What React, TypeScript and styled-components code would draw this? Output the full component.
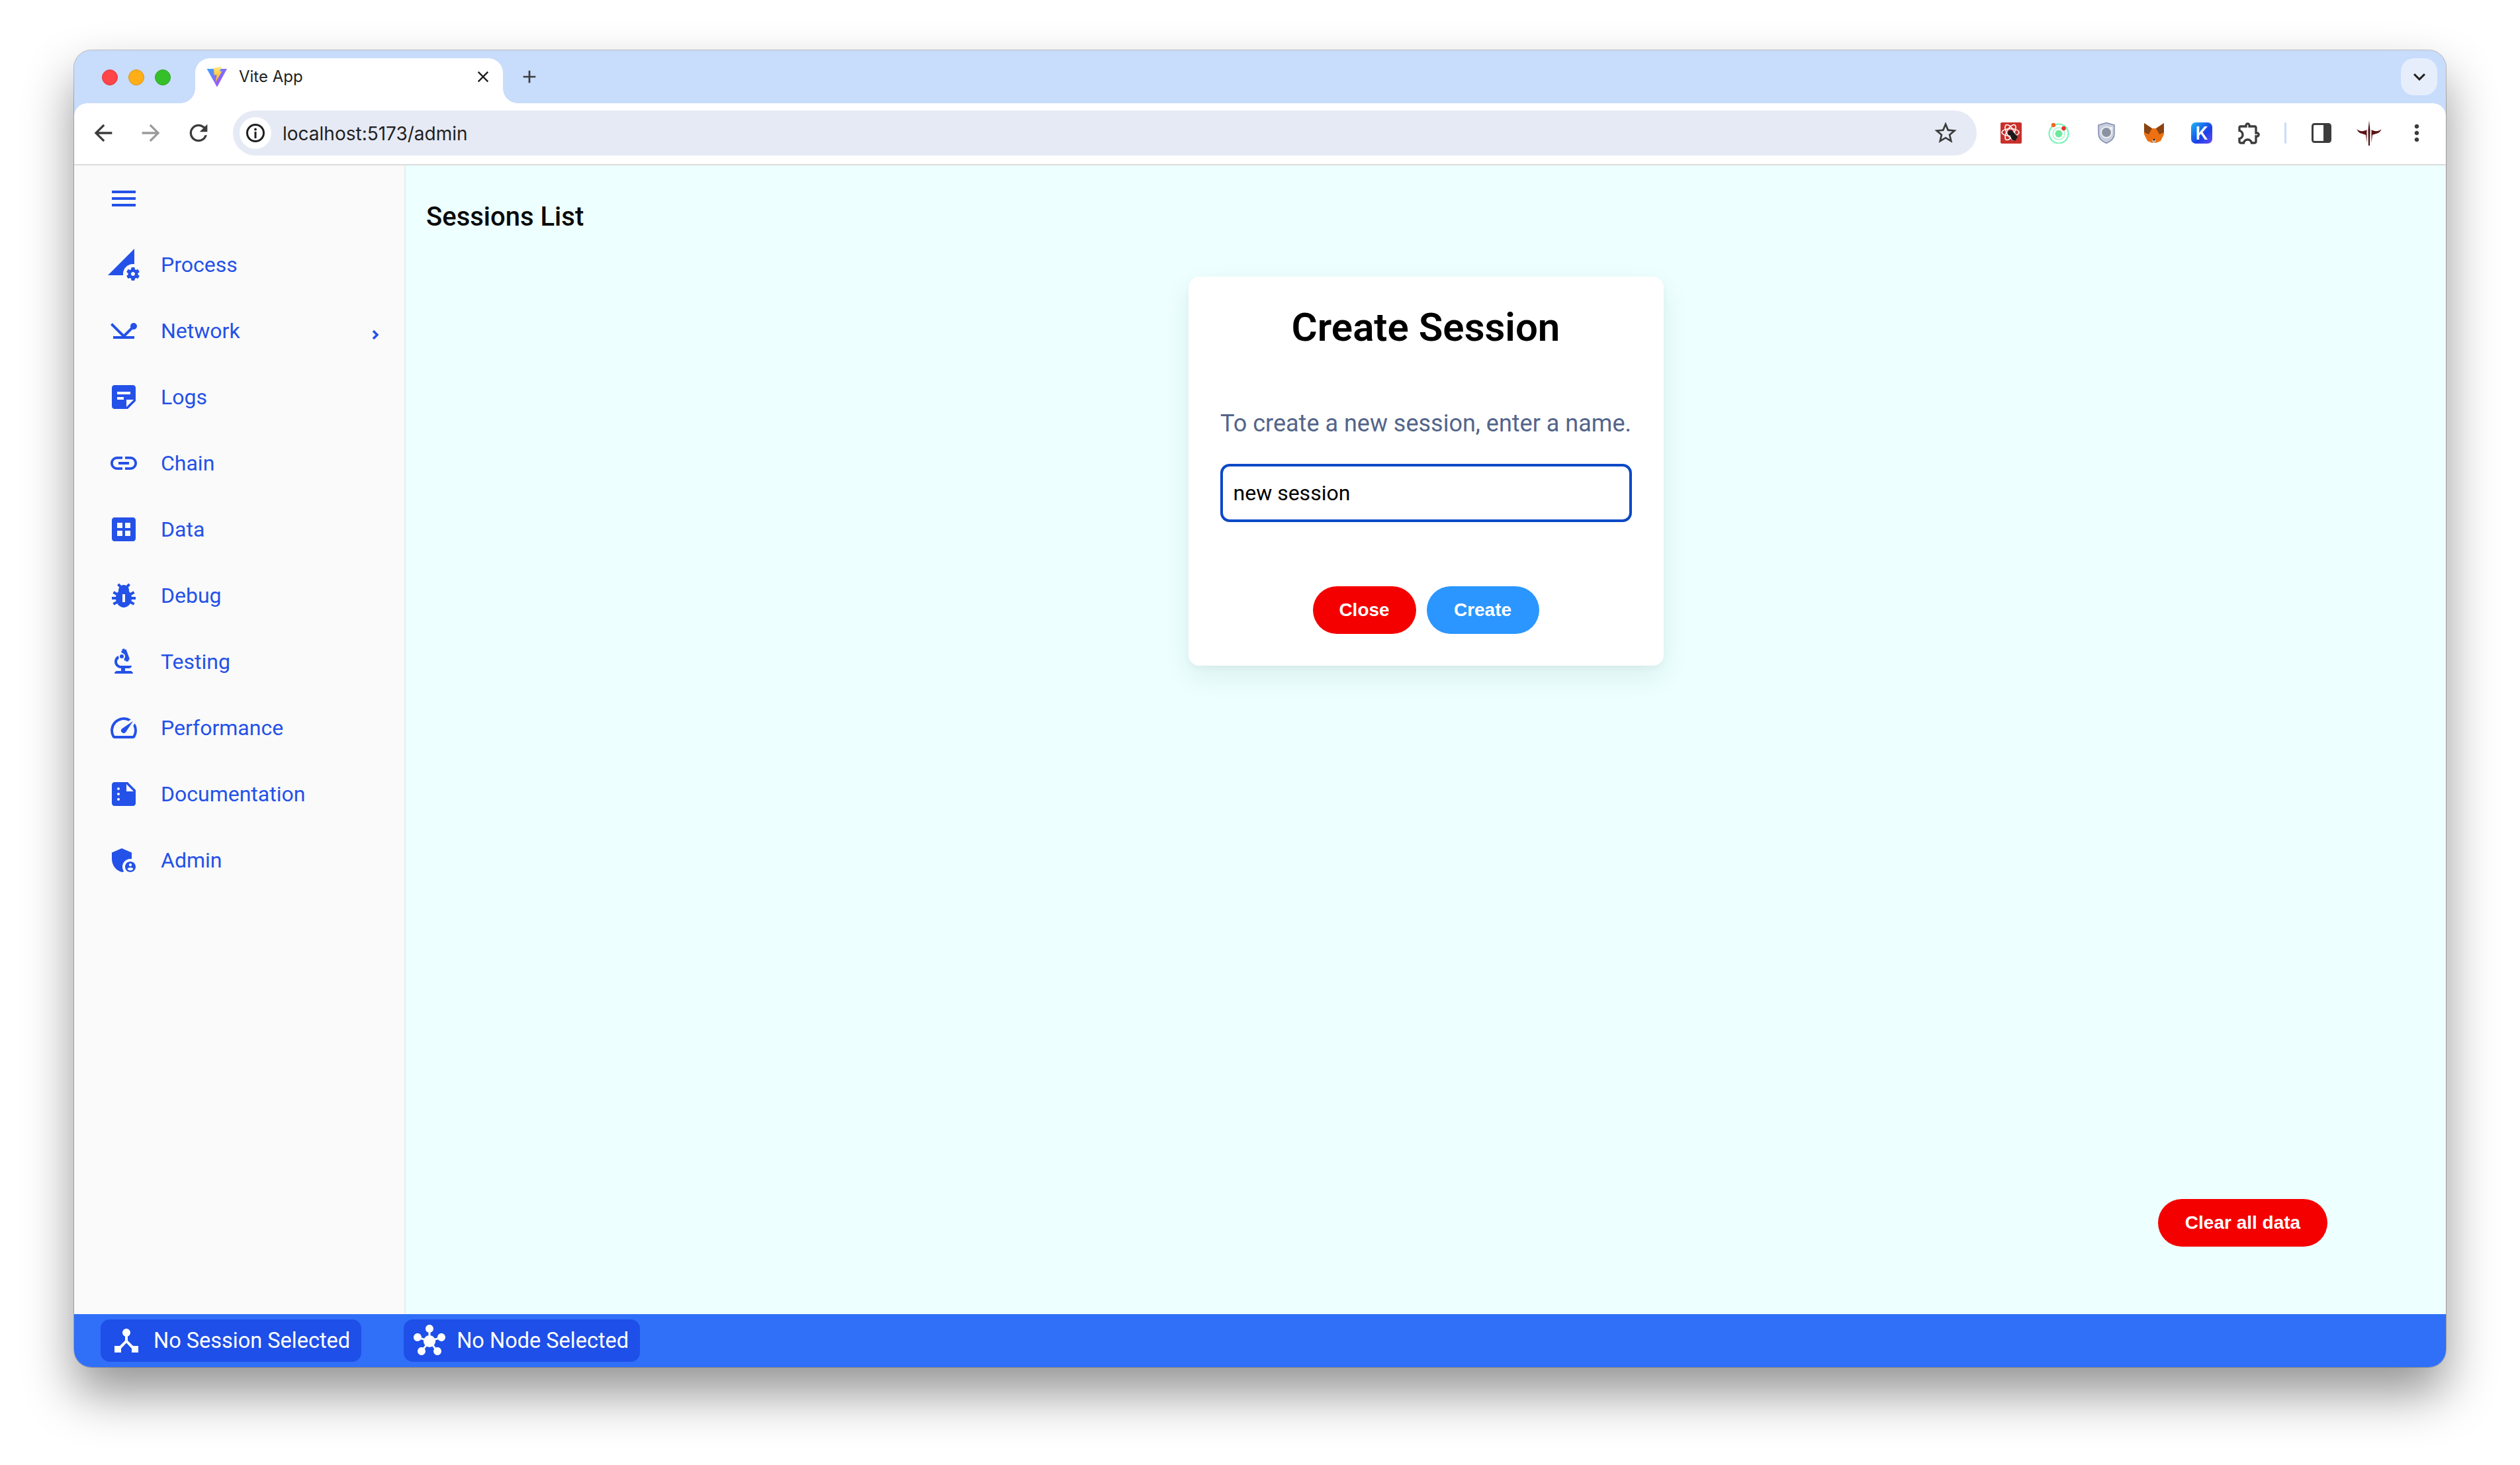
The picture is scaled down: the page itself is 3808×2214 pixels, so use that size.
import React from 'react';
import styled, {createGlobalStyle} from 'styled-components';
import {
    MdAdd, MdAdminPanelSettings, MdArrowBack, MdArrowForward, MdBiotech, MdClose, MdDataset, MdDeviceHub,
    MdExpandMore, MdHub, MdLink, MdMenu, MdMoreVert, MdNetworkPing, MdOutlineExtension, MdPermDataSetting,
    MdPestControl, MdRefresh, MdSpeed, MdStarBorder, MdStickyNote2, MdSummarize
} from 'react-icons/md';

const GlobalStyle = createGlobalStyle`
  html, body {
    margin: 0;
    background: #fff;
    font-family: 'Inter', 'Liberation Sans', sans-serif;
  }
  * {
    box-sizing: border-box;
  }
`;

const Page = styled.div`
  width: 3808px;
  height: 2214px;
  padding: 76px 112px 148px;
  background: #fff;
`;

const BrowserWindow = styled.div`
  height: 100%;
  display: flex;
  flex-direction: column;
  overflow: hidden;
  background: #c8dcfc;
  border-radius: 26px;
  box-shadow: 0 0 0 1px rgba(0, 0, 0, .22), 0 40px 76px rgba(0, 0, 0, .42);
`;

const TabStrip = styled.div`
  height: 80px;
  flex: none;
  display: flex;
  padding: 12px 13px 0 42px;
`;

const Lights = styled.div`
  display: flex;
  gap: 16px;
  margin: 17px 37px 0 0;
`;

const Light = styled.span<{$fill: string; $edge: string}>`
  width: 24px;
  height: 24px;
  border-radius: 50%;
  background: ${props => props.$fill};
  border: 1px solid ${props => props.$edge};
`;

const Tab = styled.div`
  position: relative;
  width: 465px;
  height: 68px;
  display: flex;
  align-items: center;
  padding: 0 16px 12px 17px;
  background: #fff;
  border-radius: 22px 22px 0 0;
  color: #1f1f1f;

  &::before, &::after {
    content: '';
    position: absolute;
    bottom: 0;
    width: 22px;
    height: 22px;
  }
  &::before {
    left: -22px;
    background: radial-gradient(circle at 0 0, transparent 21.5px, #fff 22px);
  }
  &::after {
    right: -22px;
    background: radial-gradient(circle at 100% 0, transparent 21.5px, #fff 22px);
  }
`;

const TabTitle = styled.span`
  flex: 1;
  margin-left: 17px;
  font-size: 24px;
  line-height: 32px;
`;

const NewTab = styled.div`
  width: 32px;
  height: 32px;
  margin: 12px 0 0 24px;
  color: #3c3c3c;
  font-size: 32px;
  display: flex;
`;

const TabMenu = styled.div`
  width: 55px;
  height: 56px;
  margin-left: auto;
  display: flex;
  align-items: center;
  justify-content: center;
  background: #e6eefc;
  border-radius: 20px;
  color: #1f1f1f;
  font-size: 36px;
`;

const Toolbar = styled.div`
  height: 94px;
  flex: none;
  display: flex;
  align-items: center;
  padding: 0 8px 2px;
  background: #fff;
  border-radius: 20px 20px 0 0;
  border-bottom: 2px solid #dcdcdc;
`;

const ToolSlot = styled.div<{$muted?: boolean}>`
  width: 72px;
  height: 72px;
  flex: none;
  display: flex;
  align-items: center;
  justify-content: center;
  color: ${props => (props.$muted ? '#9a9a9a' : '#3c3c3c')};
  font-size: 40px;
`;

const AddressBar = styled.div`
  flex: 1;
  height: 68px;
  margin: 0 16px 0 16px;
  display: flex;
  align-items: center;
  padding: 0 27px 0 10px;
  background: #e6eaf5;
  border-radius: 34px;
  color: #1f1f1f;
  font-size: 28px;
`;

const SiteInfo = styled.div`
  width: 48px;
  height: 48px;
  display: flex;
  align-items: center;
  justify-content: center;
  background: #fff;
  border-radius: 50%;
`;

const Url = styled.span`
  flex: 1;
  margin-left: 17px;
  line-height: 34px;
  padding-top: 2px;
`;

const ToolDivider = styled.span`
  width: 3px;
  height: 32px;
  margin: 0 17px;
  flex: none;
  background: #c8dcfc;
  border-radius: 2px;
`;

const Body = styled.div`
  flex: 1;
  min-height: 0;
  display: flex;
`;

const Sidebar = styled.nav`
  width: 501px;
  flex: none;
  background: #fafafa;
  border-right: 2px solid #eaeeee;
`;

const SideRow = styled.div`
  height: 100px;
  display: flex;
  align-items: center;
  gap: 32px;
  padding-left: 51px;
  color: #2451e8;
  font-family: 'Roboto', sans-serif;
  font-size: 32px;
`;

const SideIcon = styled.span`
  width: 48px;
  height: 48px;
  flex: none;
  display: flex;
  font-size: 48px;
`;

const SubArrow = styled.svg`
  width: 12px;
  height: 16px;
  margin: 12px 38px 0 auto;
`;

const Main = styled.main`
  flex: 1;
  display: flex;
  flex-direction: column;
  background: #edffff;
  font-family: 'Roboto', sans-serif;
`;

const PageTitle = styled.h2`
  margin: 56px 0 0 31px;
  font-size: 40px;
  line-height: 44px;
  font-weight: 500;
  color: #0a0a0a;
`;

const Card = styled.section`
  width: 718px;
  margin-top: 68px;
  align-self: center;
  display: flex;
  flex-direction: column;
  align-items: center;
  padding: 41px 48px 48px;
  background: #fff;
  border-radius: 16px;
  box-shadow: 0 16px 40px rgba(20, 60, 60, .08), 0 4px 10px rgba(20, 60, 60, .04);
`;

const CardTitle = styled.h1`
  margin: 0;
  font-size: 60px;
  line-height: 72px;
  font-weight: 600;
  color: #000;
`;

const CardText = styled.p`
  margin: 82px 0 34px;
  font-size: 36px;
  line-height: 54px;
  color: #53658a;
  white-space: nowrap;
`;

const NameInput = styled.input`
  width: 100%;
  height: 88px;
  padding: 0 16px;
  background: #fff;
  border: 4px solid #0b49c6;
  border-radius: 14px;
  outline: none;
  font-family: inherit;
  font-size: 32px;
  color: #000;
`;

const CardActions = styled.div`
  display: flex;
  gap: 16px;
  margin-top: 97px;
`;

const PillButton = styled.button<{$tone: 'red' | 'blue'; $width: number}>`
  width: ${props => props.$width}px;
  height: 72px;
  padding: 0;
  border: none;
  border-radius: 36px;
  background: ${props => (props.$tone === 'red' ? '#f50000' : '#2b96ff')};
  color: #fff;
  font-family: 'Liberation Sans', sans-serif;
  font-size: 28px;
  font-weight: 700;
`;

const ClearRow = styled.div`
  margin: auto 179px 102px 0;
  align-self: flex-end;
  display: flex;
`;

const StatusBar = styled.footer`
  height: 80px;
  flex: none;
  display: flex;
  align-items: center;
  gap: 64px;
  padding-left: 40px;
  background: #306ff8;
`;

const StatusPill = styled.div`
  height: 64px;
  display: flex;
  align-items: center;
  gap: 17px;
  padding: 0 17px 0 15px;
  background: #1e4fe8;
  border-radius: 14px;
  color: #fff;
  font-family: 'Roboto', sans-serif;
  font-size: 32.5px;
`;

const ViteIcon = () => (
    <svg width="32" height="32" viewBox="0 0 32 32">
        <defs>
            <linearGradient id="viteBody" x1="0" y1="0" x2="1" y2="1">
                <stop offset="0" stopColor="#41a5ff"/>
                <stop offset="1" stopColor="#bd34fe"/>
            </linearGradient>
            <linearGradient id="viteBolt" x1="0" y1="0" x2="0" y2="1">
                <stop offset="0" stopColor="#ffea83"/>
                <stop offset="1" stopColor="#ffa800"/>
            </linearGradient>
        </defs>
        <path d="M0.5 4 L31 4 L16 31.5 Z" fill="url(#viteBody)"/>
        <path d="M11 3 L22.5 0.5 L20 8 L23.5 7.5 L13.5 25 L15.5 13 L11.5 13.5 Z" fill="url(#viteBolt)"/>
    </svg>
);

const InfoIcon = () => (
    <svg width="30" height="30" viewBox="0 0 30 30">
        <circle cx="15" cy="15" r="12.5" fill="none" stroke="#1f1f1f" strokeWidth="3"/>
        <circle cx="15" cy="9.5" r="1.9" fill="#1f1f1f"/>
        <rect x="13.5" y="13" width="3" height="10" fill="#1f1f1f"/>
    </svg>
);

const AtomIcon = () => (
    <svg width="32" height="32" viewBox="0 0 32 32">
        <rect width="32" height="32" rx="2" fill="#c9302c"/>
        <g fill="none" stroke="#fff" strokeWidth="1.5">
            <ellipse cx="15" cy="15" rx="13" ry="5.5"/>
            <ellipse cx="15" cy="15" rx="13" ry="5.5" transform="rotate(60 15 15)"/>
            <ellipse cx="15" cy="15" rx="13" ry="5.5" transform="rotate(120 15 15)"/>
        </g>
        <circle cx="15" cy="16" r="4" fill="#1a1a1a"/>
        <path d="M15 20 L20 15 L26 22 L22 28 L17 26 Z" fill="#1a1a1a"/>
    </svg>
);

const OrbitIcon = () => (
    <svg width="32" height="32" viewBox="0 0 32 32">
        <circle cx="16" cy="17" r="14.5" fill="none" stroke="#6ff2b4" strokeWidth="2"/>
        <circle cx="16" cy="17" r="9" fill="none" stroke="#a5f7d2" strokeWidth="1.5"/>
        <circle cx="16" cy="17" r="5.5" fill="#6fe89f"/>
        <circle cx="8" cy="4" r="3.2" fill="#ef6a22"/>
        <circle cx="23.5" cy="9" r="3.2" fill="#e33526"/>
    </svg>
);

const ShieldIcon = () => (
    <svg width="26" height="32" viewBox="0 0 26 32">
        <path d="M13 0.5 L25 4 V17 C25 24 19 29 13 31.5 C7 29 1 24 1 17 V4 Z" fill="#c9cedd" stroke="#7f8bae" strokeWidth="1.5"/>
        <circle cx="13" cy="15" r="8" fill="#8b93a3" stroke="#eef0f5" strokeWidth="2"/>
        <circle cx="20" cy="9" r="2.5" fill="#eef0f5"/>
    </svg>
);

const FoxIcon = () => (
    <svg width="32" height="32" viewBox="0 0 32 32">
        <path d="M1 1 L13 9 H19 L31 1 L31 18 L26 28 L19 31 H13 L6 28 L1 18 Z" fill="#ed7112"/>
        <path d="M1 1 L13 9 L8 18 L1 15 Z M31 1 L19 9 L24 18 L31 15 Z" fill="#8a4413"/>
        <path d="M13 26 H19 L18 31 H14 Z" fill="#cbb8a6"/>
        <path d="M14 25 H18 L16 28 Z" fill="#1c1c1c"/>
    </svg>
);

const KIcon = () => (
    <svg width="32" height="32" viewBox="0 0 32 32">
        <defs>
            <linearGradient id="kFill" x1="0" y1="0" x2="1" y2="1">
                <stop offset="0" stopColor="#1fb5f2"/>
                <stop offset=".6" stopColor="#1c3fe8"/>
                <stop offset="1" stopColor="#6a4df5"/>
            </linearGradient>
        </defs>
        <rect width="32" height="32" rx="7" fill="url(#kFill)"/>
        <text x="16" y="26" textAnchor="middle" fontFamily="Inter, sans-serif" fontSize="27" fontWeight="600" fill="#fff">K</text>
    </svg>
);

const SidePanelIcon = () => (
    <svg width="30" height="30" viewBox="0 0 30 30">
        <rect x="1.5" y="1.5" width="27" height="27" rx="3" fill="#fff" stroke="#3c3c3c" strokeWidth="3"/>
        <path d="M18 2 H26 A2 2 0 0 1 28 4 V26 A2 2 0 0 1 26 28 H18 Z" fill="#3c3c3c"/>
    </svg>
);

const HornsIcon = () => (
    <svg width="40" height="38" viewBox="0 0 40 38">
        <path d="M20 0 L21.5 15 L21 38 H19 L18.5 15 Z" fill="#4a0f10"/>
        <path d="M16.5 14 C12 17 5 17 1.5 13 C3 20 11 20 15 22 L16.5 34 Z" fill="#5b1315"/>
        <path d="M23.5 14 C28 17 35 17 38.5 13 C37 20 29 20 25 22 L23.5 34 Z" fill="#5b1315"/>
    </svg>
);

const navItems = [
    {label: 'Process', icon: <MdPermDataSetting/>},
    {label: 'Network', icon: <MdNetworkPing/>, sub: true},
    {label: 'Logs', icon: <MdStickyNote2/>},
    {label: 'Chain', icon: <MdLink/>},
    {label: 'Data', icon: <MdDataset/>},
    {label: 'Debug', icon: <MdPestControl/>},
    {label: 'Testing', icon: <MdBiotech/>},
    {label: 'Performance', icon: <MdSpeed/>},
    {label: 'Documentation', icon: <MdSummarize/>},
    {label: 'Admin', icon: <MdAdminPanelSettings/>},
];

const App: React.FunctionComponent = () => {
    return (
        <Page>
            <GlobalStyle/>
            <BrowserWindow>
                <TabStrip>
                    <Lights>
                        <Light $fill="#ff4548" $edge="#e0383c"/>
                        <Light $fill="#ffae17" $edge="#de9412"/>
                        <Light $fill="#35c02a" $edge="#2ba420"/>
                    </Lights>
                    <Tab>
                        <ViteIcon/>
                        <TabTitle>Vite App</TabTitle>
                        <MdClose size={28}/>
                    </Tab>
                    <NewTab><MdAdd/></NewTab>
                    <TabMenu><MdExpandMore/></TabMenu>
                </TabStrip>
                <Toolbar>
                    <ToolSlot><MdArrowBack/></ToolSlot>
                    <ToolSlot $muted><MdArrowForward/></ToolSlot>
                    <ToolSlot><MdRefresh/></ToolSlot>
                    <AddressBar>
                        <SiteInfo><InfoIcon/></SiteInfo>
                        <Url>localhost:5173/admin</Url>
                        <MdStarBorder size={40} color="#3c3c3c"/>
                    </AddressBar>
                    <ToolSlot><AtomIcon/></ToolSlot>
                    <ToolSlot><OrbitIcon/></ToolSlot>
                    <ToolSlot><ShieldIcon/></ToolSlot>
                    <ToolSlot><FoxIcon/></ToolSlot>
                    <ToolSlot><KIcon/></ToolSlot>
                    <ToolSlot><MdOutlineExtension/></ToolSlot>
                    <ToolDivider/>
                    <ToolSlot><SidePanelIcon/></ToolSlot>
                    <ToolSlot><HornsIcon/></ToolSlot>
                    <ToolSlot><MdMoreVert/></ToolSlot>
                </Toolbar>
                <Body>
                    <Sidebar>
                        <SideRow>
                            <SideIcon><MdMenu/></SideIcon>
                        </SideRow>
                        {navItems.map(item => (
                            <SideRow key={item.label}>
                                <SideIcon>{item.icon}</SideIcon>
                                {item.label}
                                {item.sub &&
                                    <SubArrow viewBox="0 0 12 16">
                                        <path d="M3 2 L9 8 L3 14" fill="none" stroke="#2451e8" strokeWidth="3.5"/>
                                    </SubArrow>}
                            </SideRow>
                        ))}
                    </Sidebar>
                    <Main>
                        <PageTitle>Sessions List</PageTitle>
                        <Card>
                            <CardTitle>Create Session</CardTitle>
                            <CardText>To create a new session, enter a name.</CardText>
                            <NameInput defaultValue="new session"/>
                            <CardActions>
                                <PillButton $tone="red" $width={156}>Close</PillButton>
                                <PillButton $tone="blue" $width={170}>Create</PillButton>
                            </CardActions>
                        </Card>
                        <ClearRow>
                            <PillButton $tone="red" $width={256}>Clear all data</PillButton>
                        </ClearRow>
                    </Main>
                </Body>
                <StatusBar>
                    <StatusPill><MdDeviceHub size={48}/>No Session Selected</StatusPill>
                    <StatusPill><MdHub size={48}/>No Node Selected</StatusPill>
                </StatusBar>
            </BrowserWindow>
        </Page>
    );
};

export default App;
